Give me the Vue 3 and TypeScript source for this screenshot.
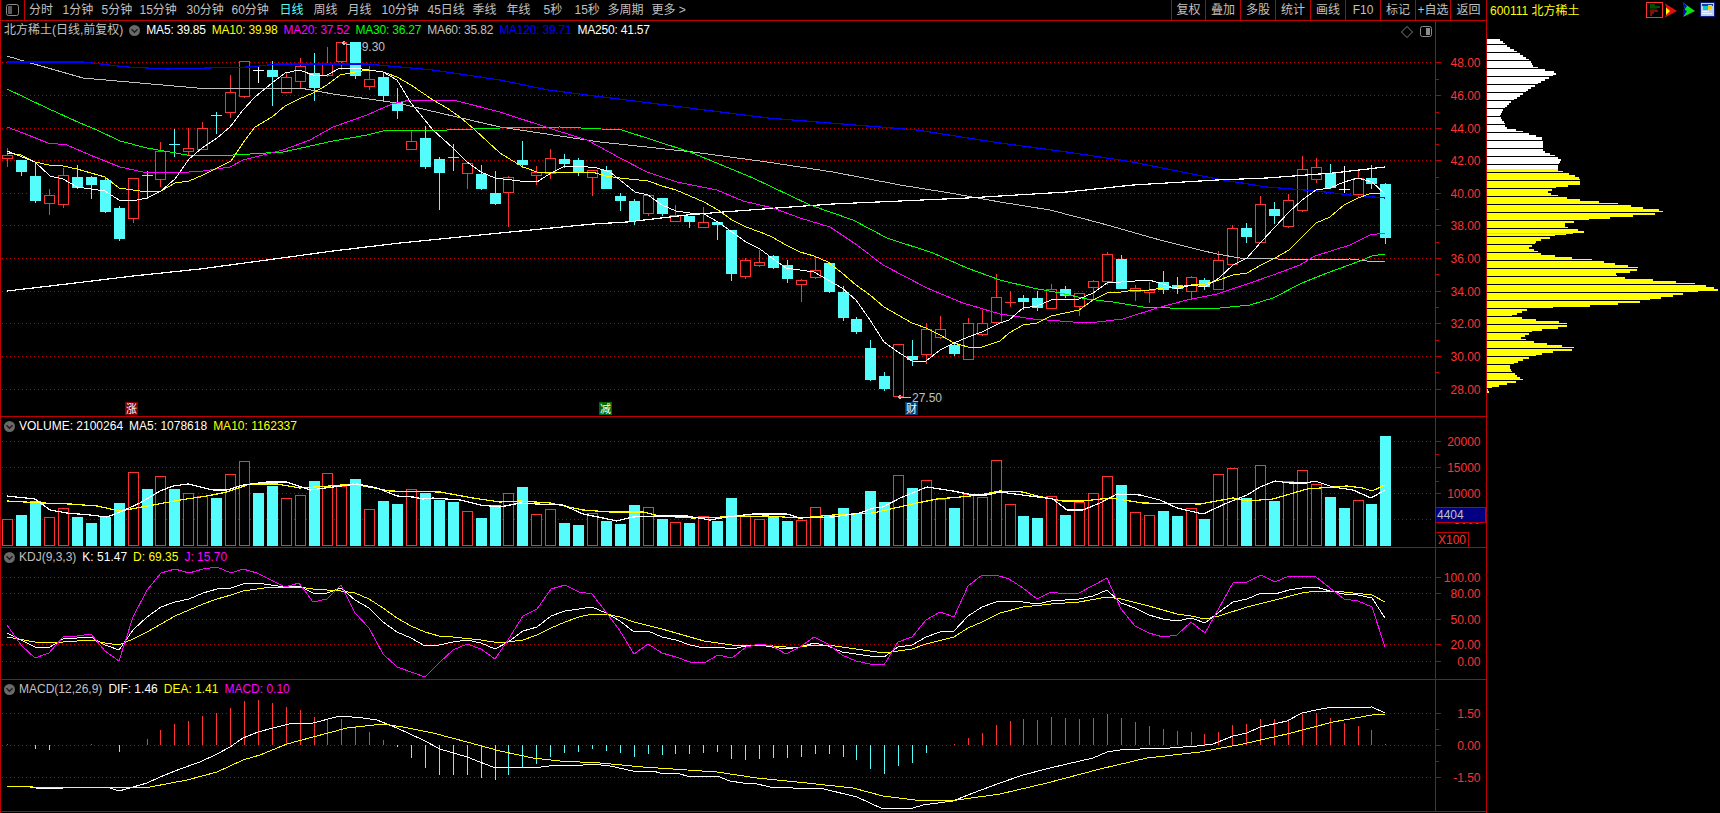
<script setup lang="ts">
type Candle = [number, number, number, number, number];
type Legend = { text: string; cls: string };

const X0 = 7.3;
const STEP = 13.92;
const cx = (i: number) => Math.round(X0 + i * STEP);

const tabs: [string, number][] = [
	["分时", 33.5], ["1分钟", 39], ["5分钟", 38], ["15分钟", 47], ["30分钟", 45], ["60分钟", 48],
	["日线", 34], ["周线", 34], ["月线", 34], ["10分钟", 46], ["45日线", 45], ["季线", 34],
	["年线", 37], ["5秒", 31], ["15秒", 33], ["多周期", 44], ["更多 >", 40]
];
const buttons: [string, number][] = [
	["复权", 34], ["叠加", 35], ["多股", 35], ["统计", 35], ["画线", 35],
	["F10", 35], ["标记", 35], ["+自选", 35], ["返回", 36]
];

// colour (0 red, 1 cyan, 2 white), high, body top, body bottom, low
const candles: Candle[] = [
	[0,148,155,158,167],[1,160,160,172,176],[1,162,176,201,203],[0,189,195,203,215],[0,168,175,204,208],
	[1,165,177,188,189],[1,176,177,185,199],[1,178,180,212,213],[1,206,208,239,241],[0,178,178,218,223],
	[1,171,175,175,199],[0,142,151,179,187],[1,129,144,144,157],[0,128,148,151,155],[0,122,128,149,149],
	[1,112,115,115,134],[0,75,92,112,118],[0,61,61,96,98],[2,67,70,70,83],[1,61,70,77,106],
	[0,72,77,92,92],[0,58,66,81,88],[1,53,73,88,101],[0,47,64,75,77],[0,42,42,61,70],
	[1,42,42,76,79],[0,66,79,86,90],[1,73,77,96,101],[1,88,102,111,119],[0,131,141,149,150],
	[1,126,138,167,169],[1,157,159,173,210],[1,144,157,157,171],[0,163,163,173,189],[1,165,174,189,190],
	[1,171,193,204,205],[0,176,177,192,227],[1,141,160,165,168],[0,166,172,175,185],[0,149,158,173,179],
	[1,154,159,164,168],[1,158,160,172,176],[0,170,170,177,196],[1,166,170,189,189],[1,193,196,201,211],
	[1,199,201,221,225],[0,195,195,213,216],[1,198,198,214,216],[0,205,215,221,221],[1,216,216,222,228],
	[0,207,222,227,227],[1,222,222,225,240],[1,230,230,274,281],[0,258,260,276,279],[0,250,262,265,267],
	[1,255,256,268,269],[1,260,265,279,283],[0,279,280,284,302],[0,257,270,277,279],[1,262,263,292,293],
	[1,286,292,318,321],[1,317,319,332,334],[1,340,348,380,381],[1,372,376,389,391],[0,344,344,396,396],
	[1,340,356,360,366],[0,323,329,354,364],[0,316,329,337,339],[1,342,345,354,356],[0,318,323,359,359],
	[0,310,323,334,336],[0,274,297,322,325],[0,291,302,302,307],[1,295,298,302,310],[1,291,298,308,311],
	[0,284,289,308,309],[1,286,289,296,298],[0,293,293,306,316],[0,280,281,287,299],[0,252,254,281,285],
	[1,255,259,289,289],[0,285,288,291,301],[0,282,290,292,303],[1,271,282,290,294],[1,277,285,289,294],
	[0,276,277,291,299],[1,278,280,287,290],[0,251,260,289,289],[0,225,228,264,264],[1,223,228,237,243],
	[0,196,204,242,242],[1,202,209,216,224],[0,194,200,226,228],[0,156,169,210,212],[0,158,167,179,183],
	[1,164,173,188,189],[2,166,189,189,193],[0,170,178,194,198],[1,165,178,184,189],[1,183,184,238,244]
];

const volTops = [
	519,515,501,517,508,517,523,517,503,472,489,476,489,493,496,498,474,461,493,486,
	498,495,481,473,486,479,509,501,504,489,493,500,502,511,518,505,493,487,514,509,
	523,525,513,521,524,505,507,519,522,523,516,521,498,515,519,516,521,520,507,515,
	508,513,491,502,475,488,480,499,508,494,497,460,504,516,518,496,515,502,493,476,
	485,512,515,511,516,508,519,474,468,498,465,501,481,470,484,497,508,500,504,436
];
const volRed = new Set([0,3,4,9,11,13,14,16,17,20,21,23,24,26,29,33,36,38,39,42,46,48,50,53,54,57,58,64,66,67,69,70,71,72,75,77,78,79,81,82,85,87,88,90,92,93,94,97]);

const macdEnds = [
	744,745,749,750,745,745,744,745,752,745,739,730,724,721,716,713,708,701,700,703,
	707,710,717,719,719,726,732,740,747,758,768,775,775,775,778,780,775,767,764,757,
	753,752,749,751,753,757,754,755,754,754,753,752,759,760,759,758,758,757,754,754,
	757,760,769,774,766,763,753,745,744,738,733,725,721,719,720,717,718,719,718,714,
	718,722,726,729,731,732,734,732,725,724,719,719,719,714,713,718,723,726,730,744
];

const ma5 = "7,151 35,162 50,176 63,179 77,187 91,189 105,191 119,200 137,200 147,198 161,191 175,179 189,159 202,148 217,138 230,127 243,110 255,97 272,83 285,73 299,70 313,75 327,75 340,68 355,68 369,70 383,72 397,80 411,103 433,130 453,148 467,162 481,172 495,178 520,181 537,182 551,173 563,167 579,166 597,168 610,172 620,180 635,192 648,195 662,205 676,211 690,213 704,214 718,222 732,232 746,242 760,249 772,258 786,268 800,270 814,272 828,280 842,288 856,300 870,320 884,342 898,352 912,361 926,361 940,350 954,343 968,337 982,332 1000,323 1009,320 1023,308 1037,306 1051,300 1079,299 1093,293 1107,283 1121,282 1135,281 1149,280 1163,284 1177,289 1191,285 1205,287 1219,278 1233,265 1247,258 1261,242 1275,227 1289,212 1302,200 1316,190 1330,188 1344,182 1358,178 1372,182 1385,194";
const ma10 = "7,153 21,155 35,162 49,165 63,166 77,169 91,173 105,177 119,188 133,190 147,192 161,191 175,183 189,181 203,175 217,168 231,161 243,143 255,127 272,117 285,106 299,99 313,93 327,85 340,75 355,72 369,70 383,72 397,77 411,85 433,100 447,108 460,117 475,130 500,153 508,158 523,167 537,172 551,173 565,172 592,172 606,176 620,178 648,181 662,186 676,190 690,196 704,202 718,210 732,220 746,227 760,232 772,237 786,245 800,252 814,256 828,262 842,273 856,285 870,295 884,307 898,315 912,323 926,328 940,335 954,343 968,347 982,347 1000,341 1009,333 1023,325 1037,323 1051,316 1065,313 1079,310 1093,300 1107,293 1121,292 1135,290 1149,290 1163,288 1177,287 1191,285 1205,284 1219,280 1233,275 1247,273 1261,265 1275,258 1289,250 1302,237 1316,223 1330,217 1344,205 1358,198 1372,193 1385,193";
const ma20 = "7,127 23,133 48,143 67,145 90,155 120,167 143,172 175,173 203,171 230,167 243,160 283,150 310,140 333,127 367,115 392,104 410,100 457,101 500,112 555,130 587,140 620,158 647,172 677,182 717,190 743,201 773,208 800,218 830,227 857,245 883,265 927,288 963,303 1000,314 1033,319 1060,321 1073,322 1097,322 1123,319 1157,308 1187,300 1217,294 1247,284 1273,275 1300,265 1315,256 1350,245 1370,235 1385,233";
const ma30 = "7,89 47,108 80,123 97,130 120,141 147,148 187,155 233,155 283,152 333,141 367,135 383,131 403,130 447,130 500,128 560,127 622,130 690,152 753,178 810,205 853,220 887,238 933,253 967,268 1000,280 1033,288 1060,293 1087,299 1113,302 1143,307 1170,308 1220,308 1250,305 1273,298 1302,283 1327,273 1360,261 1372,256 1385,254";
const ma60 = "7,56 27,62 83,78 197,88 300,88 333,94 397,103 500,127 600,142 693,152 767,162 833,172 900,185 950,193 1000,202 1050,210 1100,223 1160,240 1200,250 1217,254 1240,258 1273,258 1283,260 1350,259 1367,261 1385,262";
const ma120 = "7,62 83,62 127,67 167,69 250,67 277,64 367,64 433,70 500,80 548,90 768,118 917,130 1000,143 1067,152 1133,162 1217,179 1267,187 1317,191 1350,195 1385,198";
const ma250 = "7,291 67,284 133,276 200,269 267,260 333,251 400,243 500,233 593,224 627,222 687,215 723,212 777,208 833,204 900,201 967,198 1000,196 1067,192 1133,185 1217,180 1267,178 1333,173 1385,167";

const volMa5 = "7,496 35,499 50,510 67,513 90,515 107,517 120,512 140,503 160,491 173,486 188,484 213,490 227,490 243,485 267,482 287,482 310,490 333,487 357,484 377,488 397,496 413,497 423,499 433,498 460,500 480,505 500,507 520,503 537,504 563,505 583,514 603,518 617,521 633,517 657,516 687,516 710,520 727,517 753,514 787,514 800,518 833,517 860,513 873,508 883,507 900,498 927,487 953,491 973,495 987,495 1000,492 1030,496 1053,499 1067,510 1083,510 1100,503 1117,494 1140,495 1160,500 1177,508 1203,514 1227,503 1247,495 1260,487 1275,481 1290,483 1307,483 1315,481 1333,487 1353,490 1371,498 1385,490";
const volMa10 = "7,501 43,503 70,504 97,506 120,511 153,505 180,500 207,496 227,492 250,484 277,484 300,488 330,486 353,484 390,491 440,492 473,498 500,502 520,501 550,503 583,510 610,512 643,512 660,516 693,518 723,517 767,516 800,518 833,515 873,513 917,503 937,499 960,497 980,495 1000,491 1023,492 1037,496 1063,501 1083,501 1110,498 1143,503 1200,504 1233,498 1247,501 1273,499 1307,489 1333,487 1347,486 1363,488 1372,491 1385,485";

const kdjK = "7,633 35,647 50,647 63,639 91,637 105,645 119,650 133,630 147,617 161,607 175,602 189,599 203,593 217,589 231,588 243,584 257,583 271,585 285,587 299,586 313,593 327,593 341,588 355,600 369,608 383,622 397,632 411,638 425,646 439,645 453,642 467,640 481,643 495,649 508,642 523,631 537,627 551,616 565,611 579,609 592,607 606,613 620,621 634,632 648,631 662,637 676,640 690,645 704,648 718,647 732,649 746,646 760,645 772,647 786,649 800,647 814,643 828,646 842,652 856,654 870,656 884,657 898,647 912,645 926,637 940,632 954,631 968,616 982,607 996,602 1009,601 1023,602 1037,604 1051,601 1079,599 1093,596 1107,590 1121,603 1135,608 1149,615 1163,619 1177,621 1191,618 1205,623 1219,612 1233,602 1247,599 1261,593 1275,594 1289,590 1302,588 1316,587 1330,591 1344,594 1358,595 1372,598 1385,618";
const kdjD = "7,637 35,642 50,643 63,642 91,640 105,643 119,645 133,639 147,632 161,624 175,616 189,610 203,604 217,599 231,595 243,591 257,589 271,587 299,587 313,589 327,590 341,591 355,593 369,599 383,608 397,618 411,626 425,632 439,636 453,637 481,640 500,643 523,640 537,635 551,628 565,622 579,617 592,614 606,614 620,617 634,622 662,629 690,637 704,641 718,643 732,645 760,645 786,647 800,647 814,645 828,645 856,649 870,651 884,653 898,651 912,649 926,644 954,637 968,628 982,622 1000,613 1023,607 1051,604 1079,602 1107,597 1121,599 1149,606 1177,614 1191,616 1205,619 1219,616 1247,607 1275,600 1302,593 1316,591 1344,592 1372,595 1385,602";
const kdjJ = "7,625 21,645 35,658 49,653 63,637 77,636 91,634 105,651 119,661 133,617 147,590 161,573 175,569 189,573 203,569 217,567 231,573 243,569 257,573 271,580 285,587 299,583 313,602 327,599 341,585 355,613 369,628 383,654 397,667 411,672 425,677 439,663 453,650 467,644 481,649 495,659 508,640 523,616 537,609 551,589 565,585 579,592 592,594 606,612 620,631 634,654 648,644 662,653 676,657 690,662 704,663 718,655 732,658 746,647 760,644 772,646 786,654 800,647 814,637 828,644 842,655 856,661 870,664 884,665 898,642 912,637 926,620 940,612 954,617 968,586 982,575 996,575 1009,579 1023,588 1037,599 1051,592 1065,594 1079,593 1107,578 1121,609 1135,626 1149,633 1163,637 1177,635 1191,622 1205,633 1219,608 1233,583 1247,582 1261,575 1275,582 1289,576 1316,577 1330,588 1344,599 1358,601 1372,607 1385,647";

const macdDif = "7,786 30,787 43,789 83,787 110,788 119,791 133,787 147,783 160,777 180,769 200,762 217,754 230,747 243,738 258,732 273,728 293,723 313,723 340,716 363,718 377,720 397,728 423,740 440,749 467,757 493,767 520,767 533,768 557,765 583,765 592,764 610,766 633,771 653,771 660,773 680,774 687,776 717,776 730,781 743,783 753,783 770,787 793,788 820,788 857,797 883,809 913,808 923,805 953,801 973,793 1000,783 1023,775 1050,768 1080,761 1093,758 1107,752 1120,750 1140,749 1170,748 1197,746 1213,744 1233,736 1247,733 1260,727 1287,721 1302,713 1316,710 1327,708 1372,707 1385,713";
const macdDea = "7,786 20,786 33,787 113,787 150,787 187,780 217,772 243,760 260,755 287,744 313,737 347,728 383,724 403,727 433,733 467,742 500,751 533,758 560,761 600,763 643,767 717,772 757,778 807,783 853,788 883,796 923,801 957,800 1000,794 1047,783 1100,769 1147,758 1200,752 1243,744 1287,734 1333,722 1372,715 1385,714";

// chip distribution outline: y then right edge, read from a 3x crop of the panel
const chipPts: [number, number][] = [
	[57,180],[65,192],[75,200],[85,218],[95,235],[105,250],[118,268],[135,280],[145,305],[155,352],[165,340],[175,320],[185,300],[195,285],[205,265],[215,255],[228,235],[240,218],[250,205],[265,190],[288,180],[305,193],[320,195],[330,240],[340,270],[350,305],[365,308],[385,308],[395,318],[405,345],[418,365],[430,355],[445,355],
	[446,350],[458,385],[470,418],[490,420],[500,350],[515,320],[525,355],[535,400],[550,545],[560,600],[570,680],[580,640],[590,520],[600,415],[610,370],[620,380],[632,440],[642,350],[650,335],[660,290],[670,285],[680,265],[690,290],[700,305],[710,385],[718,465],[728,520],[740,595],[750,590],[760,520],[770,540],[780,680],[790,775],[800,820],[808,835],[815,750],[825,700],[835,640],[845,590],[855,450],[865,265],[875,240],[885,215],[895,265],[905,380],[918,380],[930,280],[940,265],[952,240],[965,290],[978,390],[985,415],[995,320],[1010,270],[1020,240],[1035,210],[1050,212],[1060,225],[1078,250],[1090,195],[1105,140],[1110,148],[1122,138]
];
const SPLIT = 169;

function chipPath(from: number, to: number)
{
	let d = "";
	for (let y = from; y < to; y += 2)
	{
		const v = (y - 20) * 3;
		let k = 0;
		while (k < chipPts.length - 2 && chipPts[k + 1][0] < v) k++;
		const [v0, x0] = chipPts[k];
		const [v1, x1] = chipPts[k + 1];
		const t = Math.min(1, Math.max(0, (v - v0) / (v1 - v0 || 1)));
		const right = Math.round(1440 + (x0 + (x1 - x0) * t) / 3);
		d += `M1487 ${y}H${right}V${y + 2}H1487Z`;
	}
	return d;
}
const chipWhite = chipPath(39, SPLIT);
const chipYellow = chipPath(SPLIT, 394);
const chipGaps = Array.from({ length: 45 }, (_, i) => 44 + i * 8);

const priceLabels = [48, 46, 44, 42, 40, 38, 36, 34, 32, 30, 28].map((p, i) => ({
	text: p.toFixed(2),
	y: [62, 95, 128, 160, 193, 225, 258, 291, 323, 356, 389][i]
}));
const priceMinor = [79, 112, 144, 177, 209, 242, 274, 307, 340, 372];
const volLabels = [["20000", 441], ["15000", 467], ["10000", 493], ["5000", 519]] as [string, number][];
const volMinor = [454, 481];
const kdjLabels = [["100.00", 577], ["80.00", 593], ["50.00", 619], ["20.00", 644], ["0.00", 661]] as [string, number][];
const macdLabels = [["1.50", 713], ["0.00", 745], ["-1.50", 777]] as [string, number][];
const macdMinor = [729, 761];

const legendMain: Legend[] = [
	{ text: "MA5: 39.85", cls: "white" }, { text: "MA10: 39.98", cls: "yellow" }, { text: "MA20: 37.52", cls: "magenta" },
	{ text: "MA30: 36.27", cls: "green" }, { text: "MA60: 35.82", cls: "grey" }, { text: "MA120: 39.71", cls: "blue" },
	{ text: "MA250: 41.57", cls: "white" }
];
const legendVol: Legend[] = [
	{ text: "VOLUME: 2100264", cls: "white" }, { text: "MA5: 1078618", cls: "white" }, { text: "MA10: 1162337", cls: "yellow" }
];
const legendKdj: Legend[] = [
	{ text: "KDJ(9,3,3)", cls: "grey" }, { text: "K: 51.47", cls: "white" }, { text: "D: 69.35", cls: "yellow" }, { text: "J: 15.70", cls: "magenta" }
];
const legendMacd: Legend[] = [
	{ text: "MACD(12,26,9)", cls: "grey" }, { text: "DIF: 1.46", cls: "white" }, { text: "DEA: 1.41", cls: "yellow" }, { text: "MACD: 0.10", cls: "magenta" }
];
</script>

<template>
	<div class="app">
		<div class="left">
			<div class="topbar">
				<div class="corner">
					<svg width="13" height="12" viewBox="0 0 13 12">
						<rect x="0.5" y="0.5" width="12" height="11" rx="2" fill="none" stroke="#8c8c8c" />
						<rect x="2" y="2" width="4" height="8" fill="#5a5a5a" />
					</svg>
				</div>
				<div class="tabs">
					<span v-for="t in tabs" :key="t[0]" class="tab" :class="{ active: t[0] === '日线' }" :style="{ width: t[1] + 'px' }">{{ t[0] }}</span>
				</div>
				<div class="buttons">
					<span v-for="b in buttons" :key="b[0]" class="btn" :style="{ width: b[1] + 'px' }">{{ b[0] }}</span>
				</div>
			</div>

			<div class="pane main">
				<svg width="1485" height="395" viewBox="1 21 1485 395">
					<line v-for="l in priceLabels" :key="l.text" x1="2" x2="1431" :y1="l.y + 0.5" :y2="l.y + 0.5" class="grid" />
					<!-- the high label sits behind the candles, the neighbouring bar hides its first digit -->
					<text x="355" y="51" class="note">49.30</text>
					<template v-for="(c, i) in candles" :key="i">
						<line :x1="cx(i) + 0.5" :x2="cx(i) + 0.5" :y1="c[1]" :y2="c[4]" :class="['wick', 'k' + c[0]]" />
						<rect v-if="c[0] === 1" :x="cx(i) - 5" :y="c[2]" width="11" :height="Math.max(c[3] - c[2], 1)" class="solid" />
						<rect v-else-if="c[2] !== c[3]" :x="cx(i) - 4.5" :y="c[2] + 0.5" width="10" :height="c[3] - c[2]" class="hollow" />
						<line v-else :x1="cx(i) - 5" :x2="cx(i) + 6" :y1="c[2] + 0.5" :y2="c[2] + 0.5" :class="['wick', 'k' + c[0]]" />
					</template>
					<polyline :points="ma60" class="ln grey-s" />
					<polyline :points="ma120" class="ln blue-s thick" />
					<polyline :points="ma250" class="ln white-s thick" />
					<polyline :points="ma30" class="ln green-s" />
					<polyline :points="ma20" class="ln magenta-s" />
					<polyline :points="ma10" class="ln yellow-s" />
					<polyline :points="ma5" class="ln white-s" />
					<polyline points="345,41 342,43 345,45 342,43 350,45" class="ln grey-s" />
					<polyline points="901,395 898,397 901,399 898,397 911,397" class="ln grey-s" />
					<text x="912" y="402" class="note">27.50</text>

					<rect x="125" y="402" width="13" height="13" fill="#800000" />
					<text x="131.5" y="413" class="mark">涨</text>
					<rect x="599" y="402" width="13" height="13" fill="#006a00" />
					<text x="605.5" y="413" class="mark">减</text>
					<rect x="905" y="402" width="13" height="13" fill="#003a70" />
					<text x="911.5" y="413" class="mark">财</text>

					<path d="M1407 26.5L1412.5 32L1407 37.5L1401.5 32Z" fill="none" stroke="#808080" />
					<rect x="1420.5" y="26.5" width="11" height="10" rx="2" fill="none" stroke="#8c8c8c" />
					<rect x="1426" y="28" width="4" height="7" fill="#8c8c8c" />

					<line x1="1435.5" x2="1435.5" y1="21" y2="416" class="axis" />
					<template v-for="l in priceLabels" :key="l.text">
						<line x1="1435" x2="1441" :y1="l.y + 0.5" :y2="l.y + 0.5" class="axis" />
						<text x="1480.5" :y="l.y + 5" class="lab">{{ l.text }}</text>
					</template>
					<line v-for="y in priceMinor" :key="y" x1="1435" x2="1439" :y1="y + 0.5" :y2="y + 0.5" class="axis" />
				</svg>
				<div class="legend wide">
					<span class="title">北方稀土(日线,前复权)</span>
					<svg class="chev" width="11" height="11" viewBox="0 0 11 11"><circle cx="5.5" cy="5.5" r="5.5" fill="#6a6a6a" /><path d="M2.5 4.2L5.5 7.2L8.5 4.2" fill="none" stroke="#1c1c1c" stroke-width="1.4" /></svg>
					<span v-for="l in legendMain" :key="l.text" class="tight" :class="l.cls">{{ l.text }}</span>
				</div>
			</div>

			<div class="pane vol">
				<svg width="1485" height="130" viewBox="1 417 1485 130">
					<line v-for="l in volLabels" :key="l[0]" x1="2" x2="1431" :y1="l[1] + 0.5" :y2="l[1] + 0.5" class="grid" />
					<template v-for="(top, i) in volTops" :key="i">
						<rect v-if="volRed.has(i)" :x="cx(i) - 4.5" :y="top + 0.5" width="10" :height="545 - top" class="hollow" />
						<rect v-else :x="cx(i) - 5" :y="top" width="11" :height="546 - top" class="solid" />
					</template>
					<polyline :points="volMa10" class="ln yellow-s thick" />
					<polyline :points="volMa5" class="ln white-s thick" />

					<line x1="1435.5" x2="1435.5" y1="417" y2="547" class="axis" />
					<template v-for="l in volLabels" :key="l[0]">
						<line x1="1435" x2="1441" :y1="l[1] + 0.5" :y2="l[1] + 0.5" class="axis" />
						<text x="1480.5" :y="l[1] + 5" class="lab">{{ l[0] }}</text>
					</template>
					<line v-for="y in volMinor" :key="y" x1="1435" x2="1439" :y1="y + 0.5" :y2="y + 0.5" class="axis" />
					<rect x="1435.5" y="507.5" width="50" height="15" fill="#000080" stroke="#c00000" />
					<text x="1437" y="519" class="cur">4404</text>
					<rect x="1435.5" y="532.5" width="33" height="15" fill="#000" stroke="#c00000" />
					<text x="1438" y="544" class="x100">X100</text>
				</svg>
				<div class="legend">
					<svg class="chev" width="11" height="11" viewBox="0 0 11 11"><circle cx="5.5" cy="5.5" r="5.5" fill="#6a6a6a" /><path d="M2.5 4.2L5.5 7.2L8.5 4.2" fill="none" stroke="#1c1c1c" stroke-width="1.4" /></svg>
					<span v-for="l in legendVol" :key="l.text" :class="l.cls">{{ l.text }}</span>
				</div>
			</div>

			<div class="pane kdj">
				<svg width="1485" height="131" viewBox="1 548 1485 131">
					<line v-for="l in kdjLabels" :key="l[0]" x1="2" x2="1431" :y1="l[1] + 0.5" :y2="l[1] + 0.5" class="grid" />
					<polyline :points="kdjK" class="ln white-s" />
					<polyline :points="kdjD" class="ln yellow-s" />
					<polyline :points="kdjJ" class="ln magenta-s" />
					<line x1="1435.5" x2="1435.5" y1="548" y2="679" class="axis" />
					<template v-for="l in kdjLabels" :key="l[0]">
						<line x1="1435" x2="1441" :y1="l[1] + 0.5" :y2="l[1] + 0.5" class="axis" />
						<text x="1480.5" :y="l[1] + 5" class="lab">{{ l[0] }}</text>
					</template>
				</svg>
				<div class="legend">
					<svg class="chev" width="11" height="11" viewBox="0 0 11 11"><circle cx="5.5" cy="5.5" r="5.5" fill="#6a6a6a" /><path d="M2.5 4.2L5.5 7.2L8.5 4.2" fill="none" stroke="#1c1c1c" stroke-width="1.4" /></svg>
					<span v-for="l in legendKdj" :key="l.text" :class="l.cls">{{ l.text }}</span>
				</div>
			</div>

			<div class="pane macd">
				<svg width="1485" height="131" viewBox="1 680 1485 131">
					<line v-for="l in macdLabels" :key="l[0]" x1="2" x2="1431" :y1="l[1] + 0.5" :y2="l[1] + 0.5" class="grid" />
					<line v-for="(end, i) in macdEnds" :key="i" :x1="cx(i) + 0.5" :x2="cx(i) + 0.5" y1="745" :y2="end" :class="end > 745 ? 'cyan-bar' : 'red-bar'" />
					<polyline :points="macdDif" class="ln white-s" />
					<polyline :points="macdDea" class="ln yellow-s" />
					<line x1="1435.5" x2="1435.5" y1="680" y2="811" class="axis" />
					<template v-for="l in macdLabels" :key="l[0]">
						<line x1="1435" x2="1441" :y1="l[1] + 0.5" :y2="l[1] + 0.5" class="axis" />
						<text x="1480.5" :y="l[1] + 5" class="lab">{{ l[0] }}</text>
					</template>
					<line v-for="y in macdMinor" :key="y" x1="1435" x2="1439" :y1="y + 0.5" :y2="y + 0.5" class="axis" />
				</svg>
				<div class="legend">
					<svg class="chev" width="11" height="11" viewBox="0 0 11 11"><circle cx="5.5" cy="5.5" r="5.5" fill="#6a6a6a" /><path d="M2.5 4.2L5.5 7.2L8.5 4.2" fill="none" stroke="#1c1c1c" stroke-width="1.4" /></svg>
					<span v-for="l in legendMacd" :key="l.text" :class="l.cls">{{ l.text }}</span>
				</div>
			</div>
		</div>

		<div class="right">
			<div class="stock">
				<span class="code">600111 北方稀土</span>
				<svg class="tools" width="70" height="17" viewBox="1646 2 70 17">
					<!-- list view button -->
					<rect x="1646.5" y="2.5" width="16" height="15" fill="none" stroke="#ff3232" />
					<path d="M1650 5h5M1650 7h10" stroke="#00a000" />
					<path d="M1650 9h7" stroke="#006000" />
					<path d="M1650 11h8M1650 13h4M1650 15h2" stroke="#ff2020" />
					<!-- red arrow -->
					<path d="M1665 3.5L1677 11L1665 17.5L1667 11Z" fill="#e01010" />
					<path d="M1666 7.5L1670 11L1666 15Z" fill="#ffff00" />
					<!-- green arrow -->
					<path d="M1683 2.5L1695 11L1683 17L1685 10Z" fill="#10e010" />
					<path d="M1683 9L1687 11L1683 17Z" fill="#0000e0" />
					<path d="M1683 2.5L1687 6L1685 9Z" fill="#0000e0" />
					<!-- window button -->
					<rect x="1700.5" y="2.5" width="14" height="14" fill="#c0d0e8" stroke="#102080" />
					<rect x="1702" y="4" width="11" height="2" fill="#1040a0" />
					<rect x="1703" y="6" width="5" height="4" fill="#00c8d8" />
					<rect x="1708" y="5" width="4" height="4" fill="#f0d000" />
					<rect x="1702" y="11" width="7" height="1" fill="#f4f4f4" />
					<rect x="1702" y="13" width="10" height="1" fill="#f4f4f4" />
				</svg>
			</div>
			<svg class="chips" width="233" height="792" viewBox="1487 21 233 792">
				<path :d="chipWhite" fill="#ffffff" />
				<path :d="chipYellow" fill="#ffff00" />
				<line v-for="y in chipGaps" :key="y" x1="1487" x2="1720" :y1="y + 0.5" :y2="y + 0.5" class="gap" />
				<line x1="1487" x2="1573" y1="233.5" y2="233.5" stroke="#54fcfc" />
			</svg>
		</div>
	</div>
</template>

<style scoped>
.app {
	display: flex;
	width: 1720px;
	height: 813px;
	background: #000;
	overflow: hidden;
	font-family: "Liberation Sans", "Noto Sans CJK SC", sans-serif;
	font-size: 12px;
}

.left {
	width: 1485px;
	flex: none;
	border-left: 1px solid #c00000;
	border-right: 1px solid #c00000;
}

.right {
	flex: 1;
	min-width: 0;
}

.topbar {
	display: flex;
	height: 20px;
	border-bottom: 1px solid #c00000;
	color: #c0c0c0;
	line-height: 20px;
}

.corner {
	display: flex;
	align-items: center;
	justify-content: center;
	width: 23px;
	border-right: 1px solid #c00000;
	flex: none;
}

.tabs {
	display: flex;
	padding-left: 4px;
}

.tab {
	flex: none;
	white-space: nowrap;
}

.tab.active {
	color: #54fcfc;
}

.buttons {
	display: flex;
	margin-left: auto;
}

.btn {
	flex: none;
	border-left: 1px solid #c00000;
	box-sizing: border-box;
	text-align: center;
	white-space: nowrap;
}

.pane {
	position: relative;
	border-bottom: 1px solid #c00000;
	line-height: 0;
}

.pane svg {
	display: block;
}

.legend {
	position: absolute;
	top: 0;
	left: 3px;
	display: flex;
	align-items: center;
	gap: 6px;
	height: 18px;
	line-height: 18px;
	white-space: nowrap;
}

.legend .chev {
	flex: none;
	margin-right: -2px;
}

.legend.wide .chev {
	margin-right: 0;
}

.legend .tight {
	letter-spacing: -0.2px;
}

.title {
	color: #c0c0c0;
}

.white { color: #fff; }
.yellow { color: #ff0; }
.magenta { color: #f0f; }
.green { color: #0f0; }
.grey { color: #c0c0c0; }
.blue { color: #00f; }

.grid {
	stroke: #c00000;
	stroke-dasharray: 1 3;
	shape-rendering: crispEdges;
}

.axis {
	stroke: #c00000;
	shape-rendering: crispEdges;
}

.ln {
	fill: none;
	stroke-width: 1;
	shape-rendering: crispEdges;
}

.thick {
	stroke-width: 1.2;
}

.white-s { stroke: #fff; }
.yellow-s { stroke: #ff0; }
.magenta-s { stroke: #f0f; }
.green-s { stroke: #0f0; }
.grey-s { stroke: #c0c0c0; }
.blue-s { stroke: #00f; }

.wick {
	shape-rendering: crispEdges;
}

.k0 { stroke: #ff3232; }
.k1 { stroke: #54fcfc; }
.k2 { stroke: #fff; }

.solid {
	fill: #54fcfc;
	shape-rendering: crispEdges;
}

.hollow {
	fill: #000;
	stroke: #ff3232;
	shape-rendering: crispEdges;
}

.red-bar {
	stroke: #ff3232;
	shape-rendering: crispEdges;
}

.cyan-bar {
	stroke: #54fcfc;
	shape-rendering: crispEdges;
}

.lab {
	fill: #ff3232;
	font-size: 12px;
	text-anchor: end;
}

.note {
	fill: #c0c0c0;
	font-size: 12px;
}

.mark {
	fill: #fff;
	font-size: 11px;
	text-anchor: middle;
}

.cur {
	fill: #c0c0c0;
	font-size: 12px;
}

.x100 {
	fill: #ff3232;
	font-size: 12px;
}

.stock {
	display: flex;
	align-items: center;
	height: 21px;
	padding-left: 3px;
	line-height: 20px;
}

.code {
	color: #ff0;
	white-space: nowrap;
}

.tools {
	margin-left: auto;
	margin-right: 4px;
	display: block;
	flex: none;
}

.chips {
	display: block;
}

.gap {
	stroke: #000;
	shape-rendering: crispEdges;
}
</style>

<style>
html, body {
	margin: 0;
	background: #000;
	overflow: hidden;
}
</style>
